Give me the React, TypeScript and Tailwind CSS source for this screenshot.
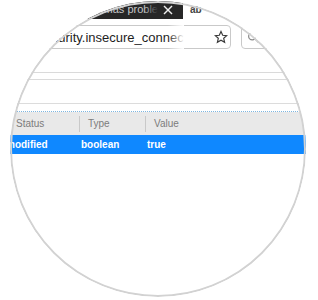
import React from "react";

function StarIcon() {
  return (
    <svg width="14" height="14" viewBox="0 0 24 24" fill="none" stroke="#3a3a3a" strokeWidth="2" strokeLinejoin="miter">
      <polygon points="12,2.5 14.9,9 21.8,9.6 16.6,14.2 18.2,21 12,17.4 5.8,21 7.4,14.2 2.2,9.6 9.1,9" />
    </svg>
  );
}

function SearchIcon() {
  return (
    <svg width="13" height="13" viewBox="0 0 16 16" fill="none" stroke="#8a8a8a" strokeWidth="1.5">
      <circle cx="6.5" cy="6.5" r="4.5" />
      <line x1="10" y1="10" x2="14" y2="14" />
    </svg>
  );
}

export default function App() {
  const font = { fontFamily: '"Liberation Sans", Arial, sans-serif' };
  return (
    <div className="w-[318px] h-[300px] bg-white pt-[1px]" style={font}>
      <div className="ml-[10px] w-[296px] h-[296px] rounded-full overflow-hidden relative bg-white">
        <div className="ml-[-10px] mt-[-1px] w-[318px]">
          {/* tab strip */}
          <div className="h-[19px] flex bg-white">
            <div className="w-[183px] shrink-0 h-full bg-[#272727] flex items-center relative">
              <div className="ml-[30px] w-[128px] shrink-0 overflow-hidden whitespace-nowrap flex justify-end relative">
                <span className="text-[11px] text-[#c8c8c8] leading-none">Cómo solucionar los problemas proble</span>
                <div className="absolute right-0 top-0 h-full w-[14px] bg-gradient-to-r from-transparent to-[#272727]" />
              </div>
              <div className="ml-[5px] flex items-center">
                <svg width="10" height="10" viewBox="0 0 10 10" stroke="#eeeeee" strokeWidth="1.4">
                  <line x1="1" y1="1" x2="9" y2="9" />
                  <line x1="9" y1="1" x2="1" y2="9" />
                </svg>
              </div>
            </div>
            <div className="flex items-center pl-[7px]">
              <span className="text-[10px] font-bold text-[#444] leading-none">ab</span>
            </div>
          </div>
          {/* url row */}
          <div className="h-[30px] pt-[6px] flex">
            <div className="ml-[-20px] w-[251px] shrink-0 h-[24px] border border-[#c9c9c9] rounded-[4px] flex items-center">
              <div className="ml-[57px] w-[146px] shrink-0 overflow-hidden whitespace-nowrap relative">
                <span className="text-[13px] text-[#1e1e1e] leading-none">security.insecure_connection_text.enabled</span>
                <div className="absolute right-0 top-0 h-full w-[16px] bg-gradient-to-r from-transparent to-white" />
              </div>
              <div className="ml-[30px] flex items-center">
                <StarIcon />
              </div>
            </div>
            <div className="ml-[10px] w-[120px] shrink-0 h-[24px] border border-[#c9c9c9] rounded-[4px] flex items-center pl-[5px]">
              <SearchIcon />
            </div>
          </div>
          <div className="h-[23px]" />
          <div className="h-px bg-[#dadada]" />
          <div className="h-[6px]" />
          <div className="h-px bg-[#dadada]" />
          <div className="h-[23px]" />
          <div className="h-px bg-[#dcdcdc]" />
          <div className="h-[7px]" />
          <div className="border-t border-dotted border-[#7fb6df]" />
          {/* header */}
          <div className="h-[23px] bg-[#e9e9e9] flex items-center text-[10px] text-[#7c7c7c]">
            <div className="w-[79px] shrink-0 pl-[16px]">Status</div>
            <div className="w-px h-[16px] bg-[#c9c9c9]" />
            <div className="w-[65px] shrink-0 pl-[8px]">Type</div>
            <div className="w-px h-[16px] bg-[#c9c9c9]" />
            <div className="pl-[8px]">Value</div>
          </div>
          {/* selected row */}
          <div className="h-[19px] bg-[#0f88ff] flex items-center text-[10px] font-bold text-white">
            <div className="w-[81px] shrink-0 pl-[6px]">modified</div>
            <div className="w-[66px] shrink-0">boolean</div>
            <div>true</div>
          </div>
        </div>
        <div className="absolute inset-0 rounded-full border-2 border-[#d2d2d2]" />
      </div>
    </div>
  );
}
